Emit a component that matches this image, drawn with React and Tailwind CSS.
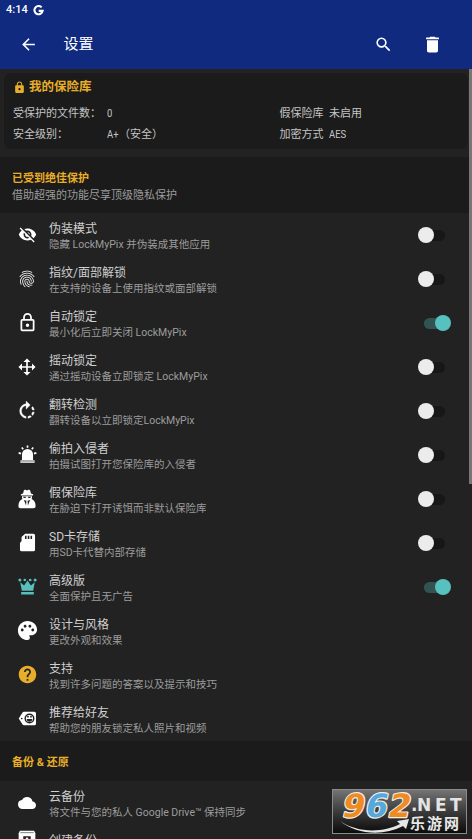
import {
  MdArrowBack,
  MdCloud,
  MdDelete,
  MdFingerprint,
  MdHelp,
  MdLock,
  MdPalette,
  MdSearch,
  MdVisibilityOff,
} from "react-icons/md";

function Icon({ children, className = "size-[21px]" }) {
  return (
    <svg viewBox="0 0 24 24" className={`shrink-0 ${className}`} fill="currentColor">
      {children}
    </svg>
  );
}

function LockIcon() {
  return (
    <Icon>
      <path d="M12 17a2 2 0 1 0 0-4 2 2 0 0 0 0 4zm6 3V10H6v10h12zm0-12a2 2 0 0 1 2 2v10a2 2 0 0 1-2 2H6a2 2 0 0 1-2-2V10a2 2 0 0 1 2-2h1V6a5 5 0 0 1 10 0v2h1zm-6-5a3 3 0 0 0-3 3v2h6V6a3 3 0 0 0-3-3z" />
    </Icon>
  );
}

function MoveIcon() {
  return (
    <Icon className="size-5">
      <path d="M13 6v5h5V7.75L22.25 12 18 16.25V13h-5v5h3.25L12 22.25 7.75 18H11v-5H6v3.25L1.75 12 6 7.75V11h5V6H7.75L12 1.75 16.25 6H13z" />
    </Icon>
  );
}

function RotateIcon() {
  return (
    <Icon className="size-[22px]">
      <path
        stroke="currentColor"
        strokeWidth="0.3"
        d="M15.55 5.55 11 1v3.07C7.06 4.56 4 7.92 4 12s3.05 7.44 7 7.93v-2.02c-2.84-.48-5-2.94-5-5.91s2.16-5.43 5-5.91V10l4.55-4.45zM19.93 11a7.9 7.9 0 0 0-1.62-3.89l-1.42 1.42c.54.75.88 1.6 1.02 2.47h2.02zM13 17.9v2.02c1.39-.17 2.74-.71 3.9-1.61l-1.44-1.44c-.75.54-1.59.89-2.46 1.03zm3.89-2.42 1.42 1.41c.9-1.16 1.45-2.5 1.62-3.89h-2.02a5.9 5.9 0 0 1-1.02 2.48z"
      />
    </Icon>
  );
}

function AlarmIcon() {
  return (
    <Icon className="size-[19px]">
      <path d="M5 19v-7a7 7 0 0 1 14 0v7h1a1 1 0 0 1 1 1v2.5H3V20a1 1 0 0 1 1-1h1z" />
      <path d="M3 20.2h18" stroke="#232323" strokeWidth="0.9" />
      <path d="M12 .5v3M4.8 3.2l1.8 2.2M19.2 3.2l-1.8 2.2M.8 10l3 .9M23.2 10l-3 .9" stroke="currentColor" strokeWidth="2.1" />
    </Icon>
  );
}

function SpyIcon() {
  return (
    <Icon className="size-5">
      <path d="M7.3 5.4 8.1 2C8.4.9 9.4.5 10.3 1l1.7.8 1.7-.8c.9-.5 1.9-.1 2.2 1l.8 3.4 2.6.9v1.6H4.7V6.3l2.6-.9z" />
      <path d="M6 8.6h12v2.6l-.6.9c3 1.3 4.9 4.3 4.9 8.2 0 1.7-1 2.7-2.5 2.7H4.2c-1.5 0-2.5-1-2.5-2.7 0-3.9 1.9-6.9 4.9-8.2l-.6-.9V8.6z" />
      <path d="M7.3 9.3h3.5l-.4 1.6H8zM13.2 9.3h3.5l-.7 1.6h-2.4zM8.3 13.1l3 1-.4 5.7zM15.7 13.1l-3 1 .4 5.7z" fill="#222" />
    </Icon>
  );
}

function SdIcon() {
  return (
    <Icon className="size-[19px]">
      <path d="M9 1h10.5a2 2 0 0 1 2 2v18a2 2 0 0 1-2 2h-15a2 2 0 0 1-2-2v-8.5L4.5 10V5L9 1z" />
      <path d="M9.8 3.5v4M13.3 3.5v4M16.8 3.5v4" stroke="#222" strokeWidth="2" />
    </Icon>
  );
}

function CrownIcon() {
  return (
    <Icon className="size-[19px] text-[#57bfbc]">
      <path d="m2.8 6.5 2 11h14.4l2-11-4.9 4.3L12 4.5l-4.3 6.3-4.9-4.3zM4 18.8h16v3.2H4z" />
      <circle cx="2.4" cy="3.8" r="1.9" />
      <circle cx="8.6" cy="3.8" r="1.7" />
      <circle cx="15.4" cy="3.8" r="1.7" />
      <circle cx="21.6" cy="3.8" r="1.9" />
    </Icon>
  );
}

function TagIcon() {
  return (
    <Icon className="size-[19px]">
      <path d="M7.5 3.5h13.2a2 2 0 0 1 2 2v13a2 2 0 0 1-2 2H7.5a2 2 0 0 1-1.7-.9L.9 12l4.9-7.6a2 2 0 0 1 1.7-.9z" />
      <circle cx="4.7" cy="12" r="1.1" fill="#222" />
      <circle cx="14.5" cy="12" r="5.4" fill="none" stroke="#222" strokeWidth="1.8" />
      <path d="M11 12.6h7a3.5 3.5 0 0 1-7 0zM11.6 8.8h2v2h-2zM15.4 8.8h2v2h-2z" fill="#222" />
    </Icon>
  );
}

function BackupIcon() {
  return (
    <Icon className="mb-3.5 size-5">
      <path d="M3.5 1h17l1.5 3v17a2 2 0 0 1-2 2H4a2 2 0 0 1-2-2V4l1.5-3z" />
      <path d="M4 3.2h16" stroke="#222" strokeWidth="0.7" />
      <path d="M7.5 7.5h9v11h-9z" fill="#222" />
      <path d="m12 8.5 3 3.6h-2v5h-2v-5H9z" />
    </Icon>
  );
}

const items = [
  { icon: <MdVisibilityOff className="size-[19px] shrink-0" />, title: "伪装模式", text: "隐藏 LockMyPix 并伪装成其他应用", on: false },
  { icon: <MdFingerprint className="size-5 shrink-0" />, title: "指纹/面部解锁", text: "在支持的设备上使用指纹或面部解锁", on: false },
  { icon: <LockIcon />, title: "自动锁定", text: "最小化后立即关闭 LockMyPix", on: true },
  { icon: <MoveIcon />, title: "摇动锁定", text: "通过摇动设备立即锁定 LockMyPix", on: false },
  { icon: <RotateIcon />, title: "翻转检测", text: "翻转设备以立即锁定LockMyPix", on: false },
  { icon: <AlarmIcon />, title: "偷拍入侵者", text: "拍摄试图打开您保险库的入侵者", on: false },
  { icon: <SpyIcon />, title: "假保险库", text: "在胁迫下打开诱饵而非默认保险库", on: false },
  { icon: <SdIcon />, title: "SD卡存储", text: "用SD卡代替内部存储", on: false },
  { icon: <CrownIcon />, title: "高级版", text: "全面保护且无广告", on: true },
  { icon: <MdPalette className="size-[23px] shrink-0" />, title: "设计与风格", text: "更改外观和效果" },
  { icon: <MdHelp className="size-[21px] shrink-0 text-[#e8ae2a]" />, title: "支持", text: "找到许多问题的答案以及提示和技巧" },
  { icon: <TagIcon />, title: "推荐给好友", text: "帮助您的朋友锁定私人照片和视频" },
];

const backupItems = [
  { icon: <MdCloud className="size-[18px] shrink-0" />, title: "云备份", text: "将文件与您的私人 Google Drive™ 保持同步" },
  { icon: <BackupIcon />, title: "创建备份", text: "" },
];

function Switch({ on }) {
  return (
    <div className={`relative flex h-4 w-[33px] items-center px-[3px] ${on ? "justify-end" : "justify-start"}`}>
      <div className={`h-[11px] w-6 rounded-full ${on ? "bg-[#315452]" : "bg-[#171717]"}`} />
      <div className={`absolute top-0 size-4 rounded-full ${on ? "right-0 bg-[#57c1bf]" : "left-0 bg-[#ececec]"}`} />
    </div>
  );
}

function Row({ item }) {
  return (
    <div className="flex h-11 shrink-0 items-center pr-[21px] pl-[15px]">
      <div className="flex w-6 justify-center pb-px text-white">{item.icon}</div>
      <div className="ml-2.5 flex-1 pt-0.5 whitespace-nowrap">
        <div className="h-4 text-[12px] leading-4 text-[#cfcfcf]">{item.title}</div>
        <div className="h-[15px] text-[10.5px] leading-[15px] text-[#9c9c9c]">{item.text}</div>
      </div>
      {item.on !== undefined && <Switch on={item.on} />}
    </div>
  );
}

function Narrow({ children }) {
  return <span className="inline-block origin-left scale-x-[0.86]">{children}</span>;
}

function Watermark() {
  return (
    <div className="absolute right-[5px] bottom-[5px] h-[45px] w-[135px] border border-[#8b8b8b] bg-linear-to-b from-[#747474] to-[#0c0c0c]">
      <svg viewBox="0 0 133 43" className="h-full w-full">
        <g
          fontFamily="DejaVu Sans"
          fontWeight="bold"
          fontSize="32"
          stroke="#f4efe8"
          strokeWidth="2.4"
          paintOrder="stroke"
          strokeLinejoin="round"
          transform="translate(4.5 0) skewX(-12)"
        >
          <text x="9" y="26.5" fill="#ee8b22">9</text>
          <text x="32" y="26.5" fill="#55a8dc">6</text>
          <text x="55" y="26.5" fill="#ee8b22">2</text>
        </g>
        <path d="M7 31c17 12 43 12 60 3l-3-3 12-2-3 10-3-3c-21 11-47 8-63-5z" fill="#e6e6e6" />
        <g fill="#e4e4e4" fontFamily="DejaVu Sans" fontWeight="bold" fontSize="17">
          <text x="78" y="21">.</text>
          <text x="84" y="21">N</text>
          <text x="102" y="21">E</text>
          <text x="117" y="21">T</text>
        </g>
        <text x="77" y="38.5" fill="#e8e8e8" fontFamily="Noto Sans CJK SC" fontWeight="bold" fontSize="15" letterSpacing="2">乐游网</text>
      </svg>
    </div>
  );
}

export default function App() {
  return (
    <main className="relative flex h-[839px] w-[472px] flex-col overflow-hidden bg-[#222222] font-['Roboto','Noto_Sans_CJK_SC',sans-serif]">
      <header className="h-[69px] shrink-0 bg-[#102a80] text-white">
        <div className="flex h-5 items-center gap-[5px] pl-1.5 text-[11px] font-medium">
          <span>4:14</span>
          <svg viewBox="0 0 12 12" className="size-[11px]" fill="none" stroke="white" strokeWidth="2.3">
            <path d="M9.4 2.6A4.5 4.5 0 1 0 10.5 6.4H6.2" />
          </svg>
        </div>
        <div className="flex h-12 items-center pr-[29px] pl-[19px]">
          <MdArrowBack className="size-[19px]" />
          <h1 className="ml-[25.5px] flex-1 text-[15px] leading-5">设置</h1>
          <MdSearch className="mr-[29px] size-[19px]" />
          <MdDelete className="size-[21px] scale-x-105" />
        </div>
      </header>

      <section className="mx-1 mt-1 mb-2 h-[76px] shrink-0 rounded-md bg-[#1b1b1b] px-[9px] pt-1 shadow-[0_0_1px_#333]">
        <div className="flex h-5 items-center gap-[3px] text-[12.5px] font-bold text-[#e8ae2a]">
          <MdLock className="size-[13px]" />
          <span className="pt-px">我的保险库</span>
        </div>
        <div className="mt-[7px] grid grid-cols-[93.5px_173px_49.5px_1fr] text-[11px] leading-[20.5px] whitespace-nowrap text-[#c4c4c4]">
          <span>受保护的文件数：</span>
          <span><Narrow>0</Narrow></span>
          <span>假保险库</span>
          <span>未启用</span>
          <span>安全级别：</span>
          <span><Narrow>A+</Narrow><span className="-ml-px">（安全）</span></span>
          <span>加密方式</span>
          <span><Narrow>AES</Narrow></span>
        </div>
      </section>

      <section className="flex h-14 shrink-0 flex-col justify-center bg-[#1b1b1b] pt-[5px] pl-3">
        <h2 className="h-4 text-[11px] leading-4 font-bold text-[#e8ae2a]">已受到绝佳保护</h2>
        <p className="h-[17px] text-[11px] leading-[17px] text-[#9c9c9c]">借助超强的功能尽享顶级隐私保护</p>
      </section>
      {items.map((item) => (
        <Row key={item.title} item={item} />
      ))}

      <section className="flex h-10 shrink-0 items-center bg-[#1b1b1b] pt-[5px] pl-3">
        <h2 className="text-[11px] font-bold text-[#e8ae2a]">备份 &amp; 还原</h2>
      </section>
      {backupItems.map((item) => (
        <Row key={item.title} item={item} />
      ))}

      {/* Scrollbar */}
      <div className="absolute top-[69px] right-0 h-[415px] w-[3px] bg-[#777777]" />
      <Watermark />
    </main>
  );
}
